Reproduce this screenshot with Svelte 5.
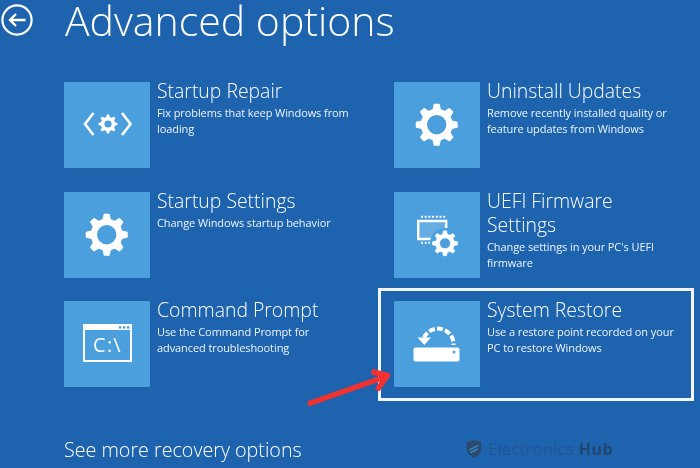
<script>
  // cog outline: n teeth round a centre, with a round hole cut by evenodd
  function gear(cx, cy, outer, root, hole, n = 8) {
    let d = '';
    const step = (Math.PI * 2) / n;
    for (let i = 0; i < n; i++) {
      const a = i * step - Math.PI / 2;
      const pts = [
        [root, a - step * 0.3],
        [outer, a - step * 0.15],
        [outer, a + step * 0.15],
        [root, a + step * 0.3]
      ];
      for (const [r, t] of pts) {
        d += `${d ? 'L' : 'M'}${(cx + r * Math.cos(t)).toFixed(2)} ${(cy + r * Math.sin(t)).toFixed(2)}`;
      }
    }
    d += `ZM${cx - hole} ${cy}a${hole} ${hole} 0 1 0 ${hole * 2} 0a${hole} ${hole} 0 1 0 ${-hole * 2} 0Z`;
    return d;
  }

  const options = [
    { icon: 'repair', title: 'Startup Repair', text: 'Fix problems that keep Windows from loading' },
    { icon: 'gear', title: 'Uninstall Updates', text: 'Remove recently installed quality or feature updates from Windows' },
    { icon: 'gear', title: 'Startup Settings', text: 'Change Windows startup behavior' },
    { icon: 'firmware', title: 'UEFI Firmware Settings', text: "Change settings in your PC's UEFI firmware" },
    { icon: 'cmd', title: 'Command Prompt', text: 'Use the Command Prompt for advanced troubleshooting' },
    { icon: 'restore', title: 'System Restore', text: 'Use a restore point recorded on your PC to restore Windows', selected: true }
  ];
</script>

<main class="page">
  <header class="top">
    <svg class="back" viewBox="0 0 34 34" aria-hidden="true">
      <circle cx="17" cy="17" r="14.6" fill="none" stroke="#fff" stroke-width="2.2" />
      <path d="M25.500 17H10M16 11 10 17l6 6" fill="none" stroke="#fff" stroke-width="2.400" />
    </svg>
    <h1>Advanced options</h1>
  </header>

  <section class="grid">
    {#each options as opt}
      <div class="option" class:selected={opt.selected}>
        <div class="tile">
          <svg viewBox="0 0 86 86" width="86" height="86" aria-hidden="true">
            {#if opt.icon === 'gear'}
              <path d={gear(42.700, 42.700, 20.500, 15.500, 10.300)} fill="#fff" fill-rule="evenodd" stroke="#fff" stroke-width="1.200" stroke-linejoin="round" />
            {:else if opt.icon === 'repair'}
              <path d={gear(44, 42, 9.500, 7.200, 3.600)} fill="#fff" fill-rule="evenodd" />
              <path d="M29.500 31 21 42l8.500 11M58 31l8.500 11L58 53" fill="none" stroke="#fff" stroke-width="2.600" />
            {:else if opt.icon === 'firmware'}
              <path d="M27 24.700h26" stroke="#fff" stroke-width="2" stroke-dasharray="2 1.700" fill="none" />
              <path d="M27 50.700h10" stroke="#fff" stroke-width="2" stroke-dasharray="2 1.700" fill="none" />
              <path d="M45 47H24.200V29h28v7" fill="rgba(255,255,255,.14)" stroke="#fff" stroke-width="2.400" />
              <circle cx="51" cy="51.300" r="15" fill="#4b9fdc" />
              <path d={gear(51, 51.300, 12.500, 9.300, 5.500)} fill="#fff" fill-rule="evenodd" stroke="#fff" stroke-width=".8" stroke-linejoin="round" />
            {:else if opt.icon === 'cmd'}
              <path d="M20 24h47v36H20Z" fill="none" stroke="#fff" stroke-width="2" />
              <rect x="20" y="24" width="47" height="5" fill="#fff" />
              <rect x="55" y="25.200" width="2.400" height="2.400" fill="#4b9fdc" />
              <rect x="59" y="25.200" width="2.400" height="2.400" fill="#4b9fdc" />
              <rect x="63" y="25.200" width="2.400" height="2.400" fill="#4b9fdc" />
              <text x="43.500" y="51" class="prompt" text-anchor="middle">C:\</text>
            {:else}
              <path d="M30 36.500A15.500 15.500 0 0 1 59.500 44" fill="none" stroke="#fff" stroke-width="4" stroke-dasharray="6 2.200" />
              <path d="M23.500 36.500H37l-6.700 7.500Z" fill="#fff" />
              <path d="M21.500 46.500h42q2 0 2 2v10q0 2-2 2h-42q-2 0-2-2v-10q0-2 2-2Z" fill="#fff" />
              <circle cx="60" cy="51" r="1.500" fill="#4b9fdc" />
            {/if}
          </svg>
        </div>
        <div class="copy">
          <h2>{opt.title}</h2>
          <p>{opt.text}</p>
        </div>
      </div>
    {/each}
  </section>

  <footer class="more">See more recovery options</footer>

  <!-- annotation drawn on top of the screenshot -->
  <svg class="arrow" viewBox="0 0 700 468" aria-hidden="true">
    <path d="M308 404 386 376.500M371.500 371.500 387.500 375.500 377 390" stroke="#f2302f" stroke-width="5.500" fill="none" stroke-linejoin="round" />
  </svg>

  <div class="mark">
    <svg viewBox="0 0 20 22" width="18" height="20" aria-hidden="true">
      <path d="M10 1 18 3.500V11c0 5-4 8-8 10-4-2-8-5-8-10V3.500Z" fill="#2c4a6e" />
      <path d="M5 12 15 7M6 15l8-4" stroke="#3f86c9" stroke-width="1.600" />
    </svg>
    <span>Electronics <b>Hub</b></span>
  </div>
</main>

<style>
  :global(body) {
    margin: 0;
    background: #1e63ae;
  }

  .page {
    position: relative;
    box-sizing: border-box;
    width: 700px;
    height: 468px;
    overflow: hidden;
    padding-left: 64px;
    background: #1e63ae;
    color: #fff;
    font-family: "Open Sans", "Liberation Sans", sans-serif;
    filter: blur(0.35px);
  }

  .top {
    display: flex;
    align-items: flex-start;
    height: 82px;
    margin-left: -64px;
  }

  .back {
    width: 34px;
    height: 34px;
    margin-top: 3px;
    flex: none;
  }

  h1 {
    margin: 0 0 0 31px;
    font-size: 41px;
    line-height: 1;
    font-weight: 300;
    white-space: nowrap;
  }

  .grid {
    display: grid;
    grid-template-columns: 330px 1fr;
    grid-auto-rows: 86px;
    row-gap: 23.500px;
  }

  .option {
    position: relative;
    display: flex;
    gap: 7px;
  }

  /* white frame sits outside the tile */
  .selected::before {
    content: "";
    position: absolute;
    left: -16px;
    top: -13px;
    width: 310px;
    height: 107px;
    border: 3px solid #f2f6fa;
  }

  .tile {
    position: relative;
    flex: none;
    width: 86px;
    height: 86px;
    background: #4b9fdc;
  }

  .tile svg {
    display: block;
  }

  .prompt {
    font-family: "Open Sans", "Liberation Sans", sans-serif;
    font-size: 20px;
    letter-spacing: 1.200px;
    fill: #fff;
  }

  .copy {
    position: relative;
    width: 195px;
    margin-top: -3px;
  }

  h2 {
    margin: 0;
    font-size: 19.400px;
    line-height: 24.500px;
    font-weight: 300;
  }

  p {
    margin: 1.500px 0 0;
    font-size: 11px;
    line-height: 16px;
    font-weight: 400;
    letter-spacing: -0.090px;
    color: #eef5fb;
  }

  .more {
    margin-top: 50px;
    font-size: 19.700px;
    line-height: 26px;
    font-weight: 300;
  }

  .arrow {
    position: absolute;
    left: 0;
    top: 0;
    width: 700px;
    height: 468px;
    pointer-events: none;
  }

  .mark {
    position: absolute;
    left: 465px;
    top: 439px;
    display: flex;
    align-items: center;
    gap: 5px;
    color: #235590;
    font-family: "Open Sans", sans-serif;
    font-size: 16px;
    line-height: 20px;
    letter-spacing: 0.500px;
  }

  .mark b {
    color: #24466f;
    font-weight: 700;
  }
</style>
